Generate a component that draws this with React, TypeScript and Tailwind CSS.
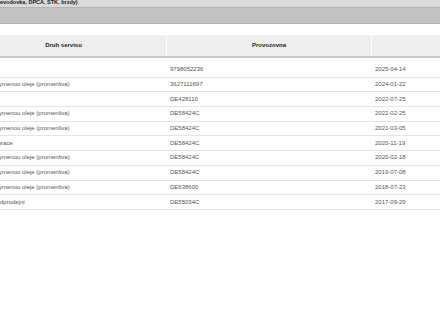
const rows = [
  { druh: "Servis", provozovna: "9798052236", datum: "2025-04-14" },
  { druh: "Servis s vymenou oleje (promenliva)", provozovna: "3627111697", datum: "2024-01-22" },
  { druh: "Servis", provozovna: "DE428110", datum: "2022-07-25" },
  { druh: "Servis s vymenou oleje (promenliva)", provozovna: "DE58424C", datum: "2022-02-25" },
  { druh: "Servis s vymenou oleje (promenliva)", provozovna: "DE58424C", datum: "2021-03-05" },
  { druh: "Nova kalibrace", provozovna: "DE58424C", datum: "2020-11-19" },
  { druh: "Servis s vymenou oleje (promenliva)", provozovna: "DE58424C", datum: "2020-02-18" },
  { druh: "Servis s vymenou oleje (promenliva)", provozovna: "DE58424C", datum: "2019-07-08" },
  { druh: "Servis s vymenou oleje (promenliva)", provozovna: "DE638600", datum: "2018-07-23" },
  { druh: "Servis predprodejni", provozovna: "DE55034C", datum: "2017-09-29" },
];

export default function App() {
  return (
    <div className="w-[440px] h-[325px] overflow-hidden bg-white font-['Liberation_Sans',Arial,sans-serif]">
      {/* Section title, cut off at the top */}
      <div className="h-[8px] bg-[#dadada] border-b border-[#b5b5b5] overflow-hidden">
        <div className="-mt-[2px] text-[5.5px] font-bold leading-[8px] text-[#222]">
          evodovka, DPCA, STK, brzdy)
        </div>
      </div>
      <div className="h-[16px] bg-[#c2c2c2] border-b border-[#b0b0b0]"></div>

      <div className="h-[11px]"></div>

      {/* Table, scrolled sideways */}
      <div className="-ml-[39px] w-[620px]">
        <div className="grid grid-cols-[206px_205px_209px] h-[23px] bg-[#eeeeee] border-b-2 border-[#c8c8c8] text-[6px] font-bold text-[#222]">
          <div className="flex items-center justify-center border-r border-white">Druh servisu</div>
          <div className="flex items-center justify-center border-r border-white">Provozovna</div>
          <div className="flex items-center justify-center">Datum provedení</div>
        </div>
        <div className="h-[5px]"></div>
        {rows.map((r, i) => (
          <div
            key={i}
            className="grid grid-cols-[206px_205px_209px] h-[14.7px] border-b border-[#e4e4e4] text-[6px] text-[#555] items-center"
          >
            <div className="pl-[12px] whitespace-nowrap overflow-hidden">{r.druh}</div>
            <div className="pl-[3px]">{r.provozovna}</div>
            <div className="pl-[3px]">{r.datum}</div>
          </div>
        ))}
      </div>
    </div>
  );
}
